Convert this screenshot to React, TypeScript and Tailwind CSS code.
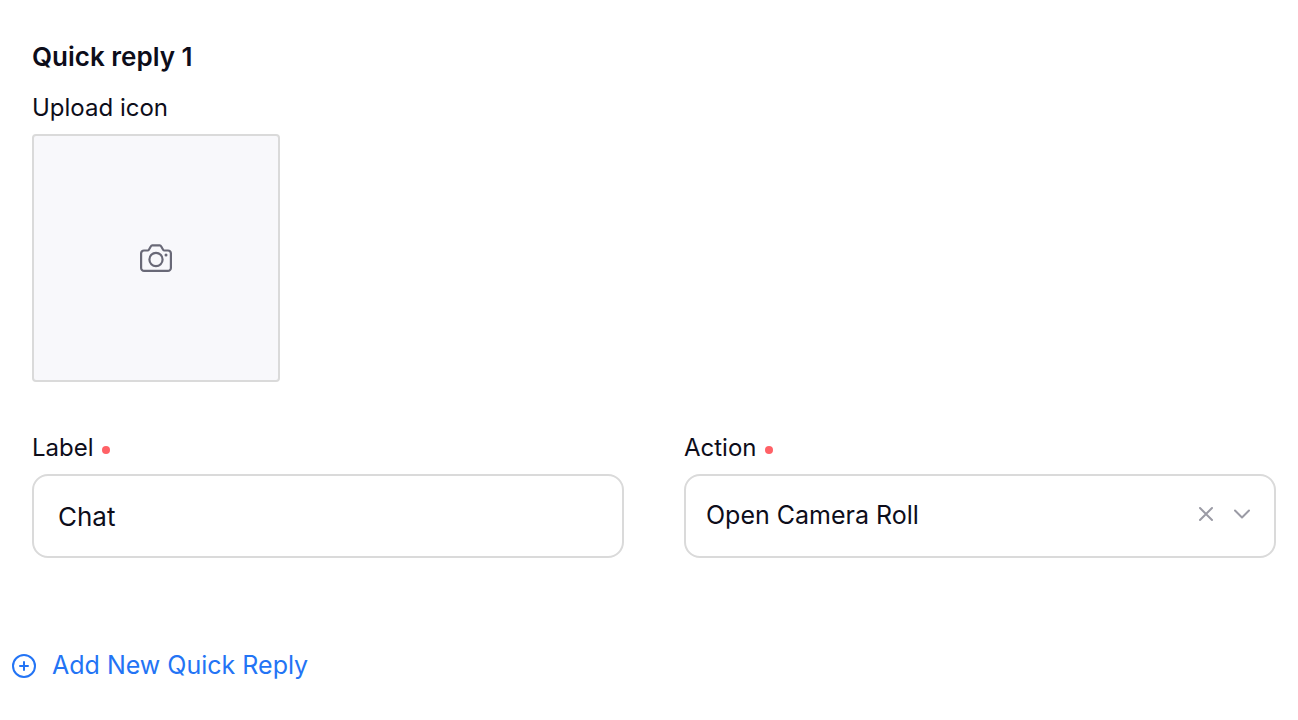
import { useState } from "react";
import type { ReactNode } from "react";

const ACTIONS = ["Open Camera Roll", "Open Camera", "Send Message", "Open Link"];

function CameraIcon() {
  return (
    <svg width="32" height="28" viewBox="0 0 32 28" fill="none" aria-hidden>
      <path
        d="M4 6.500h3.600c.6 0 1-.3 1.300-.8l2-3.500c.3-.6.8-.9 1.400-.9h7.400c.6 0 1.100.3 1.400.9l2 3.500c.3.500.7.8 1.300.8H28a2.900 2.900 0 0 1 2.900 3V23.900a3 3 0 0 1-3 3H4.100a3 3 0 0 1-3-3V9.500a2.900 2.900 0 0 1 2.900-3Z"
        stroke="currentColor"
        strokeWidth="2.200"
        strokeLinejoin="round"
      />
      <circle cx="16" cy="15.500" r="6.600" stroke="currentColor" strokeWidth="2.200" />
      <circle cx="26" cy="11" r="1.500" fill="currentColor" />
    </svg>
  );
}

function PlusCircleIcon() {
  return (
    <svg width="24" height="24" viewBox="0 0 24 24" fill="none" stroke="currentColor" strokeWidth="2" strokeLinecap="round" aria-hidden>
      <circle cx="12" cy="12" r="11" />
      <path d="M12 8v8M8 12h8" />
    </svg>
  );
}

function FieldLabel({ htmlFor, children }: { htmlFor: string; children: ReactNode }) {
  return (
    <label htmlFor={htmlFor} className="flex items-center gap-2 text-2xl">
      {children}
      <span className="mt-1 size-2 rounded-full bg-[#ff6166]" aria-hidden />
    </label>
  );
}

export default function App() {
  const [label, setLabel] = useState("Chat");
  const [action, setAction] = useState("Open Camera Roll");

  return (
    <main className="min-h-screen bg-white pt-10 pb-8 font-['Inter',sans-serif] text-[#0d0d1a]">
      <section className="pr-[22px] pl-8">
        <h2 className="text-[26px] leading-[34px] font-semibold">Quick reply 1</h2>

        <p id="upload-label" className="mt-[18px] text-2xl">
          Upload icon
        </p>
        <button
          type="button"
          aria-labelledby="upload-label"
          className="mt-2.5 flex size-[248px] items-center justify-center rounded-sm border-2 border-[#dadada] bg-[#f8f8fb] text-[#696977]"
        >
          <CameraIcon />
        </button>

        <div className="mt-[50px] grid grid-cols-2 gap-[60px]">
          <div className="flex flex-col gap-2.5">
            <FieldLabel htmlFor="reply-label">Label</FieldLabel>
            <input
              id="reply-label"
              type="text"
              value={label}
              onChange={e => setLabel(e.target.value)}
              className="h-[84px] w-full rounded-2xl border-2 border-[#dadada] px-6 text-[26px] outline-none"
            />
          </div>

          <div className="flex flex-col gap-2.5">
            <FieldLabel htmlFor="reply-action">Action</FieldLabel>
            <div className="relative flex h-[84px] items-center rounded-2xl border-2 border-[#dadada]">
              <select
                id="reply-action"
                value={action}
                onChange={e => setAction(e.target.value)}
                className="h-full w-full appearance-none bg-transparent pr-24 pl-5 text-[25px] outline-none"
              >
                <option value="" />
                {ACTIONS.map(name => (
                  <option key={name}>{name}</option>
                ))}
              </select>
              <div className="pointer-events-none absolute inset-y-0 right-6 flex items-center gap-5 pb-1 text-[#9b9ba5]">
                <button
                  type="button"
                  aria-label="Clear action"
                  onClick={() => setAction("")}
                  className="pointer-events-auto"
                >
                  <svg width="16" height="16" viewBox="0 0 16 16" fill="none" stroke="currentColor" strokeWidth="2" strokeLinecap="round">
                    <path d="m2 2 12 12M14 2 2 14" />
                  </svg>
                </button>
                <svg width="16" height="10" viewBox="0 0 16 10" fill="none" stroke="currentColor" strokeWidth="2" strokeLinecap="round" strokeLinejoin="round" aria-hidden>
                  <path d="m1 1.500 7 7 7-7" />
                </svg>
              </div>
            </div>
          </div>
        </div>
      </section>

      <button
        type="button"
        className="mt-[88px] ml-3 flex h-10 items-center gap-4 text-[25px] text-[#2374f5]"
      >
        <PlusCircleIcon />
        Add New Quick Reply
      </button>
    </main>
  );
}
